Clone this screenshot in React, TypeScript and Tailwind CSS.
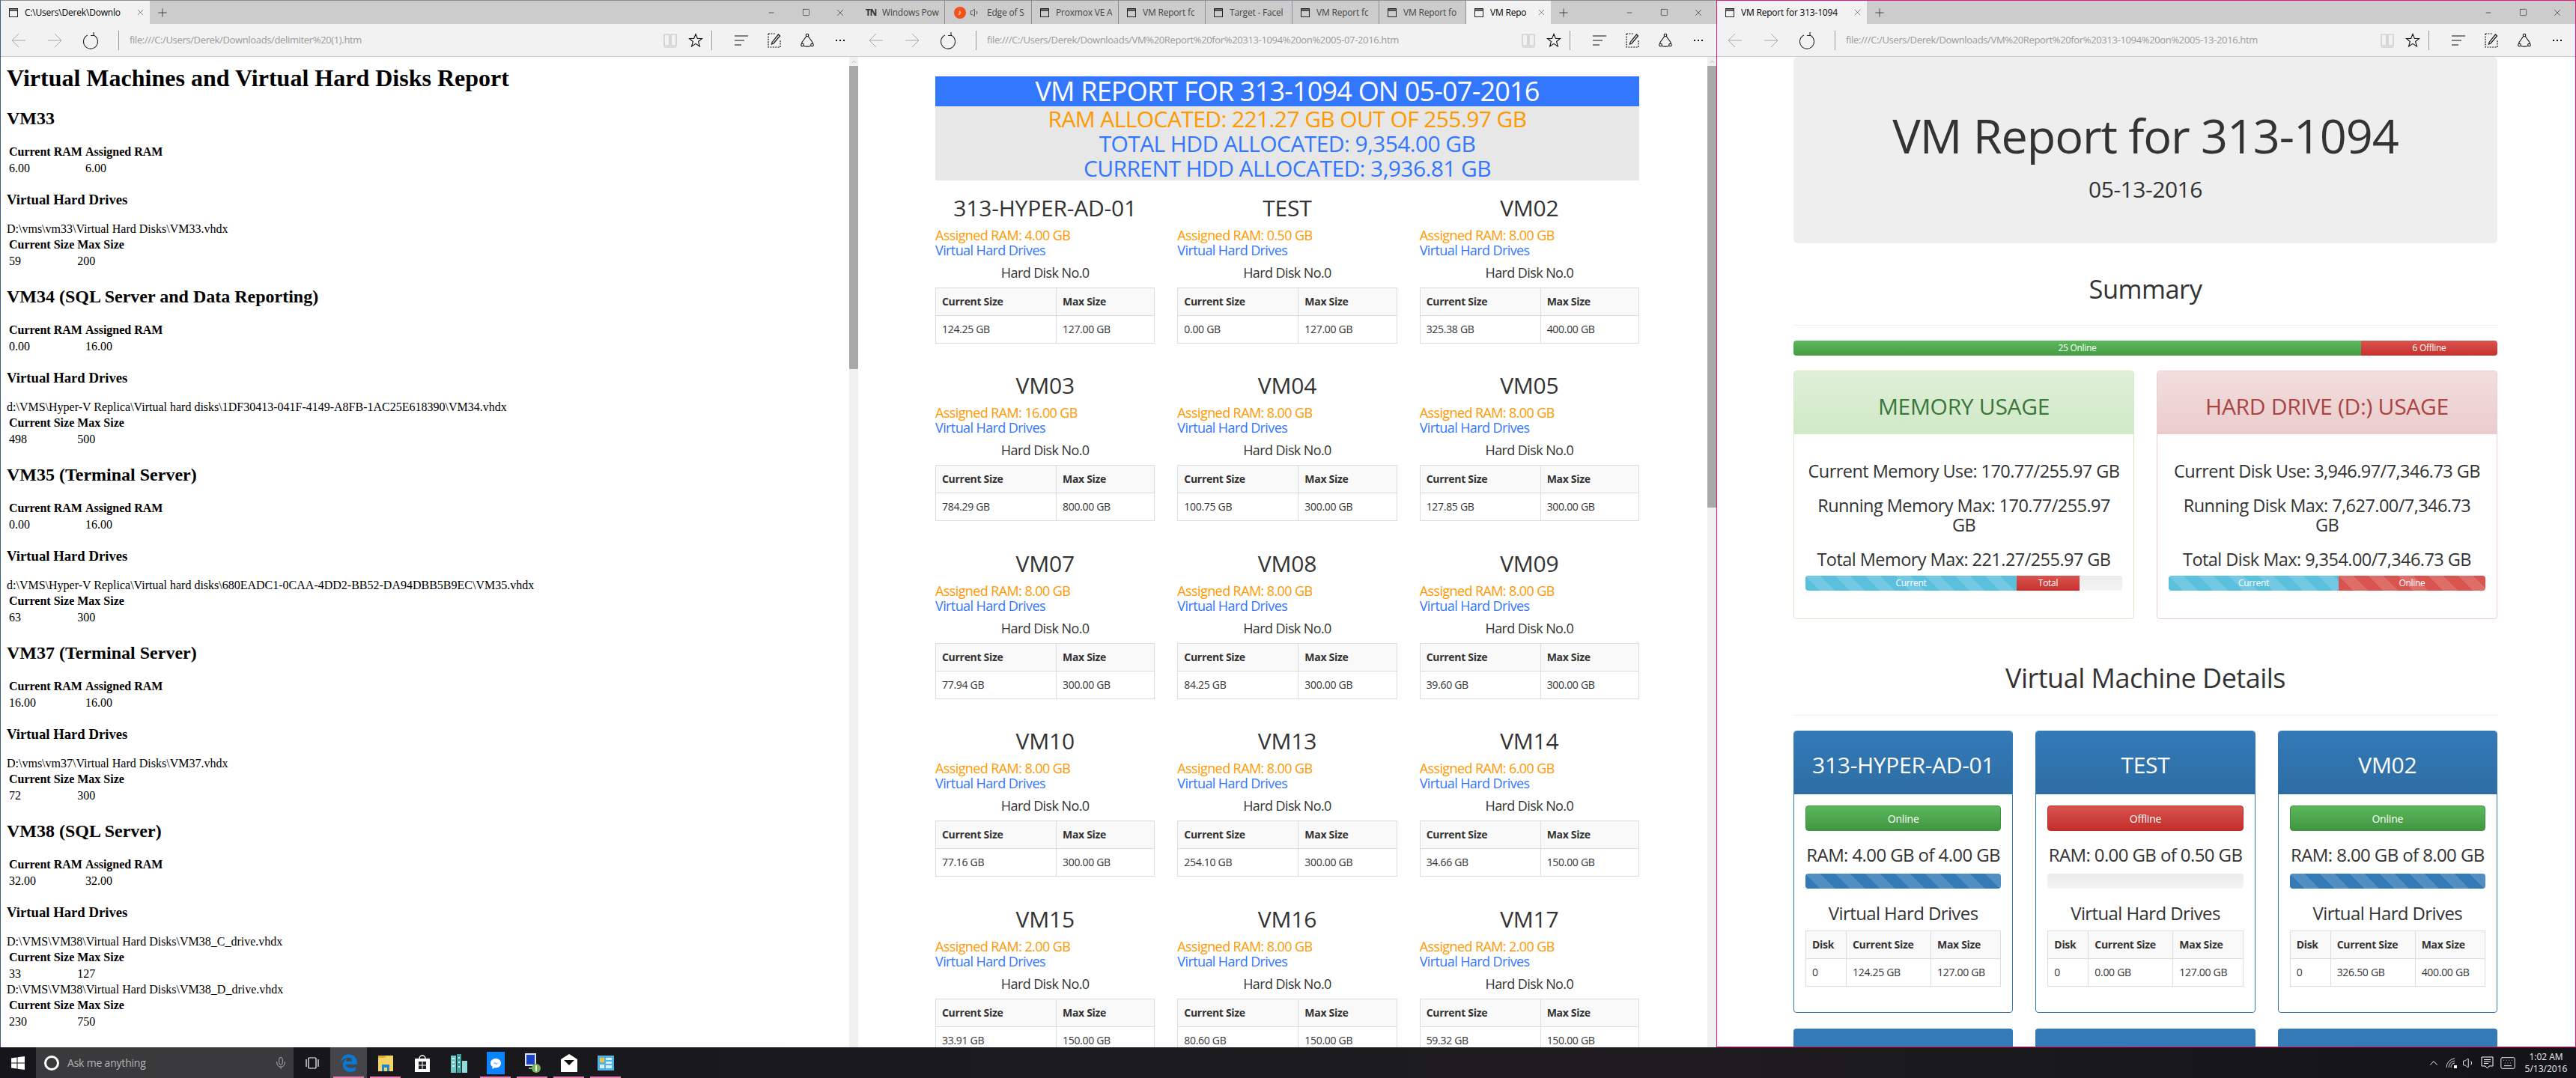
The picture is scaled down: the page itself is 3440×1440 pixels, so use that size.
import React from 'react';
import { FaEdgeLegacy } from 'react-icons/fa6';
import { ChevronUp, Keyboard, Mic, Volume1, X, Plus, Minus, Square } from 'lucide-react';

const stripes =
  'bg-[linear-gradient(45deg,rgba(255,255,255,.15)_25%,transparent_25%,transparent_50%,rgba(255,255,255,.15)_50%,rgba(255,255,255,.15)_75%,transparent_75%,transparent)] bg-size-[40px_40px]';

const PageIcon = () => (
  <svg width="14" height="14" viewBox="0 0 14 14" fill="none" stroke="#222" strokeWidth="1">
    <rect x="1.5" y="1.5" width="11" height="11" />
    <path d="M1.5 3.5h11" strokeWidth="2" />
  </svg>
);

interface TabProps {
  label: string;
  width: string;
  active?: boolean;
  icon?: React.ReactNode;
  iconWidth?: string;
}

const Tab: React.FC<TabProps> = ({ label, width, active, icon, iconWidth = 'w-[32px]' }) => (
  <div
    className={`relative flex h-full shrink-0 items-center ${width} ${
      active ? 'bg-[#f2f2f2] text-black' : 'border-r border-[#8f8f8f] bg-[#cccccc] text-[#444]'
    }`}
  >
    <div className={`flex shrink-0 items-center justify-center pl-[2px] ${iconWidth}`}>{icon ?? <PageIcon />}</div>
    <span className="overflow-hidden whitespace-nowrap text-[12px] tracking-[-0.2px]">{label}</span>
    {active && (
      <div className="ml-auto flex w-[26px] shrink-0 items-center justify-center">
        <X size={13} strokeWidth={1} color="#222" />
      </div>
    )}
  </div>
);

const Toolbar: React.FC<{ url: string }> = ({ url }) => (
  <div className="flex h-[44px] shrink-0 items-center border-b border-[#c8c8c8] bg-[#f2f2f2]">
    <div className="flex w-[48px] justify-center">
      <svg width="22" height="24" viewBox="0 0 22 24" fill="none" stroke="#a8a8a8" strokeWidth="1">
        <path d="M20 12H2M11 3l-9 9 9 9" />
      </svg>
    </div>
    <div className="flex w-[48px] justify-center">
      <svg width="22" height="24" viewBox="0 0 22 24" fill="none" stroke="#a8a8a8" strokeWidth="1">
        <path d="M2 12h18M11 3l9 9-9 9" />
      </svg>
    </div>
    <div className="flex w-[48px] justify-center">
      <svg width="20" height="24" viewBox="0 0 20 24" fill="none" stroke="#222" strokeWidth="1.1">
        <path d="M6 5a9.5 9.5 0 1 0 8 0M14 1v4.5h-4" />
      </svg>
    </div>
    <div className="ml-[13px] h-[26px] w-px bg-[#999]" />
    <div className="ml-[14px] min-w-0 flex-1 overflow-hidden whitespace-nowrap text-[13px] tracking-[-0.35px] text-[#9a9a9a]">
      {url}
    </div>
    <div className="flex w-[34px] justify-center">
      <svg width="20" height="20" viewBox="0 0 20 20" fill="none" stroke="#c4c4c4" strokeWidth="1.2">
        <path d="M2 2h7v15H2zM11 2h7v15h-7zM2 19h16" />
      </svg>
    </div>
    <div className="flex w-[34px] justify-center">
      <svg width="20" height="20" viewBox="0 0 20 20" fill="none" stroke="#111" strokeWidth="1.1">
        <path d="M10 1.5l2.4 6h6.1l-4.9 4 1.8 6.5-5.4-3.7L4.6 18l1.8-6.5-4.9-4h6.1z" />
      </svg>
    </div>
    <div className="ml-[4px] h-[26px] w-px bg-[#999]" />
    <div className="ml-[17px] flex w-[44px] justify-center">
      <svg width="20" height="20" viewBox="0 0 20 20" fill="none" stroke="#111" strokeWidth="1.2">
        <path d="M1 4h18M1 10h13M1 16h9" />
      </svg>
    </div>
    <div className="flex w-[44px] justify-center">
      <svg width="20" height="20" viewBox="0 0 20 20" fill="none" stroke="#111" strokeWidth="1.2">
        <path d="M2 1h9M2 1v18h16V9" strokeDasharray="2 1.4" />
        <path d="M15.5 2l2 2L9 14l-2.5 1 .6-2.6z" />
      </svg>
    </div>
    <div className="flex w-[44px] justify-center">
      <svg width="20" height="20" viewBox="0 0 20 20" fill="none" stroke="#111" strokeWidth="1.1">
        <circle cx="10" cy="3" r="1.8" />
        <circle cx="3.5" cy="16" r="1.8" />
        <circle cx="16.5" cy="16" r="1.8" />
        <path d="M8.8 4.5 3 12.5a5 5 0 0 0 0 2M11.2 4.5l5.8 8a5 5 0 0 1 0 2M5.3 17.2c3 1.2 6.4 1.2 9.4 0" />
      </svg>
    </div>
    <div className="mr-[2px] flex w-[44px] justify-center gap-[3px]">
      <span className="size-[2px] bg-[#111]" />
      <span className="size-[2px] bg-[#111]" />
      <span className="size-[2px] bg-[#111]" />
    </div>
  </div>
);

const TabStrip: React.FC<{ children: React.ReactNode }> = ({ children }) => (
  <div className="flex h-[31px] shrink-0 items-stretch bg-[#cccccc]">
    {children}
    <div className="flex w-[34px] shrink-0 items-center justify-center">
      <Plus size={18} strokeWidth={1} color="#222" />
    </div>
    <div className="ml-auto flex items-center pr-px">
      <div className="flex w-[46px] justify-center">
        <Minus size={10} strokeWidth={1.5} color="#111" />
      </div>
      <div className="flex w-[46px] justify-center">
        <Square size={11} strokeWidth={1.2} color="#111" />
      </div>
      <div className="flex w-[46px] justify-center">
        <X size={14} strokeWidth={1} color="#111" />
      </div>
    </div>
  </div>
);

const Scrollbar: React.FC<{ thumb: string }> = ({ thumb }) => (
  <div className="flex w-[12px] shrink-0 flex-col items-stretch bg-[#f0f0f0]">
    <div className="flex h-[12px] items-center justify-center text-[#888]">
      <ChevronUp size={9} strokeWidth={1.5} />
    </div>
    <div className={`bg-[#a8a8a8] ${thumb}`} />
  </div>
);

const leftSections = [
  {
    title: 'VM33',
    ram: ['6.00', '6.00'],
    drives: [{ path: 'D:\\vms\\vm33\\Virtual Hard Disks\\VM33.vhdx', size: ['59', '200'] }],
  },
  {
    title: 'VM34 (SQL Server and Data Reporting)',
    ram: ['0.00', '16.00'],
    drives: [
      {
        path: 'd:\\VMS\\Hyper-V Replica\\Virtual hard disks\\1DF30413-041F-4149-A8FB-1AC25E618390\\VM34.vhdx',
        size: ['498', '500'],
      },
    ],
  },
  {
    title: 'VM35 (Terminal Server)',
    ram: ['0.00', '16.00'],
    drives: [
      {
        path: 'd:\\VMS\\Hyper-V Replica\\Virtual hard disks\\680EADC1-0CAA-4DD2-BB52-DA94DBB5B9EC\\VM35.vhdx',
        size: ['63', '300'],
      },
    ],
  },
  {
    title: 'VM37 (Terminal Server)',
    ram: ['16.00', '16.00'],
    drives: [{ path: 'D:\\vms\\vm37\\Virtual Hard Disks\\VM37.vhdx', size: ['72', '300'] }],
  },
  {
    title: 'VM38 (SQL Server)',
    ram: ['32.00', '32.00'],
    drives: [
      { path: 'D:\\VMS\\VM38\\Virtual Hard Disks\\VM38_C_drive.vhdx', size: ['33', '127'] },
      { path: 'D:\\VMS\\VM38\\Virtual Hard Disks\\VM38_D_drive.vhdx', size: ['230', '750'] },
    ],
  },
];

const PlainTable: React.FC<{ head: string[]; row: string[] }> = ({ head, row }) => (
  <table className="border-separate border-spacing-[2px] text-[16px] leading-[18px]">
    <tbody>
      <tr>
        {head.map((h) => (
          <th key={h} className="p-px text-left font-bold">
            {h}
          </th>
        ))}
      </tr>
      <tr>
        {row.map((c, i) => (
          <td key={i} className="p-px">
            {c}
          </td>
        ))}
      </tr>
    </tbody>
  </table>
);

const LeftWindow = () => (
  <div className="flex w-[1146px] shrink-0 flex-col border-t border-l border-t-[#8a8f96] border-l-[#3b5a85]">
    <TabStrip>
      <Tab label="C:\Users\Derek\Downlo" width="w-[199px]" active />
    </TabStrip>
    <Toolbar url="file:///C:/Users/Derek/Downloads/delimiter%20(1).htm" />
    <div className="flex min-h-0 flex-1 bg-white">
      <div className="min-w-0 flex-1 overflow-hidden pt-[10px] pl-[8px] font-['Liberation_Serif',serif] text-black">
        <h1 className="text-[32px] leading-[37px] font-bold">Virtual Machines and Virtual Hard Disks Report</h1>
        {leftSections.map((s, i) => (
          <div key={s.title}>
            <h2 className={`text-[24px] leading-[28px] font-bold ${i === 0 ? 'mt-[21px]' : 'mt-[21.5px]'}`}>{s.title}</h2>
            <div className="mt-[19px]">
              <PlainTable head={['Current RAM', 'Assigned RAM']} row={s.ram} />
            </div>
            <h3 className="mt-[18.5px] text-[18.72px] leading-[22px] font-bold">Virtual Hard Drives</h3>
            <div className="mt-[19px]">
              {s.drives.map((d) => (
                <div key={d.path}>
                  <div className="text-[16px] leading-[18px]">{d.path}</div>
                  <PlainTable head={['Current Size', 'Max Size']} row={d.size} />
                </div>
              ))}
            </div>
          </div>
        ))}
      </div>
      <Scrollbar thumb="h-[405px]" />
    </div>
  </div>
);

const reportVms = [
  ['313-HYPER-AD-01', '4.00', '124.25', '127.00'],
  ['TEST', '0.50', '0.00', '127.00'],
  ['VM02', '8.00', '325.38', '400.00'],
  ['VM03', '16.00', '784.29', '800.00'],
  ['VM04', '8.00', '100.75', '300.00'],
  ['VM05', '8.00', '127.85', '300.00'],
  ['VM07', '8.00', '77.94', '300.00'],
  ['VM08', '8.00', '84.25', '300.00'],
  ['VM09', '8.00', '39.60', '300.00'],
  ['VM10', '8.00', '77.16', '300.00'],
  ['VM13', '8.00', '254.10', '300.00'],
  ['VM14', '6.00', '34.66', '150.00'],
  ['VM15', '2.00', '33.91', '150.00'],
  ['VM16', '8.00', '80.60', '150.00'],
  ['VM17', '2.00', '59.32', '150.00'],
];

const thClass = 'border border-[#ddd] bg-[#f9f9f9] p-[8px] text-left text-[14px] leading-[20px] font-bold tracking-[-0.3px] whitespace-nowrap';
const tdClass = 'border border-[#ddd] p-[8px] text-[14px] leading-[20px] tracking-[-0.3px] whitespace-nowrap';

const ReportCard: React.FC<{ vm: string[] }> = ({ vm }) => (
  <div className="text-[#333]">
    <div className="text-center text-[30px] leading-[33px] tracking-[-0.2px]">{vm[0]}</div>
    <div className="mt-[10px] text-[18px] leading-[20px] tracking-[-0.6px] text-[#ff9900]">Assigned RAM: {vm[1]} GB</div>
    <div className="text-[18px] leading-[20px] tracking-[-0.6px] text-[#3377ff]">Virtual Hard Drives</div>
    <div className="mt-[10px] text-center text-[18px] leading-[20px] tracking-[-0.6px]">Hard Disk No.0</div>
    <table className="mt-[10px] w-full table-fixed border-collapse">
      <tbody>
        <tr>
          <th className={`${thClass} w-[161px]`}>Current Size</th>
          <th className={thClass}>Max Size</th>
        </tr>
        <tr>
          <td className={tdClass}>{vm[2]} GB</td>
          <td className={tdClass}>{vm[3]} GB</td>
        </tr>
      </tbody>
    </table>
  </div>
);

const plainTabs = ['Proxmox VE A', 'VM Report fc', 'Target - Facel', 'VM Report fc', 'VM Report fo'];

const MiddleWindow = () => (
  <div className="flex w-[1146px] shrink-0 flex-col border-t border-t-[#8a8f96]">
    <TabStrip>
      <Tab
        label="Windows Pow"
        width="w-[116px]"
        icon={<span className="text-[12px] font-bold tracking-[-1px] text-[#333]">TN</span>}
      />
      <Tab
        label="Edge of S"
        width="w-[116px]"
        iconWidth="w-[56px]"
        icon={
          <span className="flex items-center gap-[5px]">
            <span className="flex size-[16px] items-center justify-center rounded-full bg-[#f0521e] text-[10px] font-bold text-white">
              ♪
            </span>
            <Volume1 size={14} strokeWidth={1.4} color="#333" />
          </span>
        }
      />
      {plainTabs.map((label, i) => (
        <Tab key={i} label={label} width="w-[116px]" />
      ))}
      <Tab label="VM Repo" width="w-[113px]" active />
    </TabStrip>
    <Toolbar url="file:///C:/Users/Derek/Downloads/VM%20Report%20for%20313-1094%20on%2005-07-2016.htm" />
    <div className="flex min-h-0 flex-1 bg-white">
      <div className="min-w-0 flex-1 overflow-hidden pt-[26px] pl-[103px]">
        <div className="w-[940px]">
          <div className="flex h-[40px] items-center justify-center bg-[#3377ff] text-[36px] tracking-[-0.8px] text-white">
            VM REPORT FOR 313-1094 ON 05-07-2016
          </div>
          <div className="flex h-[99px] flex-col items-center justify-center bg-[#e7e7e7] text-[30px] leading-[33px] tracking-[-0.6px]">
            <div className="text-[#ff9900]">RAM ALLOCATED: 221.27 GB OUT OF 255.97 GB</div>
            <div className="text-[#3377ff]">TOTAL HDD ALLOCATED: 9,354.00 GB</div>
            <div className="text-[#3377ff]">CURRENT HDD ALLOCATED: 3,936.81 GB</div>
          </div>
          <div className="mt-[19.5px] grid auto-rows-[237.6px] grid-cols-3 gap-x-[30px]">
            {reportVms.map((vm) => (
              <ReportCard key={vm[0]} vm={vm} />
            ))}
          </div>
        </div>
      </div>
      <Scrollbar thumb="h-[590px]" />
    </div>
  </div>
);

const detailVms = [
  ['313-HYPER-AD-01', 'Online', '4.00', '4.00', '124.25', '127.00'],
  ['TEST', 'Offline', '0.00', '0.50', '0.00', '127.00'],
  ['VM02', 'Online', '8.00', '8.00', '326.50', '400.00'],
];

const VmPanel: React.FC<{ vm: string[] }> = ({ vm }) => {
  const online = vm[1] === 'Online';
  return (
    <div className="h-[377px] overflow-hidden rounded-[4px] border border-[#337ab7]">
      <div className="flex h-[84px] items-center justify-center bg-[linear-gradient(#337ab7,#2e6da4)] pt-[4px] text-[30px] tracking-[-0.3px] text-white">
        {vm[0]}
      </div>
      <div className="px-[15px] pt-[15px]">
        <div
          className={`flex h-[34px] items-center justify-center rounded-[4px] border text-[14px] tracking-[-0.2px] text-white ${
            online
              ? 'border-[#3e8f3e] bg-[linear-gradient(#5cb85c,#419641)]'
              : 'border-[#b92c28] bg-[linear-gradient(#d9534f,#c12e2a)]'
          }`}
        >
          {vm[1]}
        </div>
        <div className="mt-[19px] text-center text-[24px] leading-[26px] tracking-[-0.6px] whitespace-nowrap">
          RAM: {vm[2]} GB of {vm[3]} GB
        </div>
        <div className="mt-[12px] h-[20px] overflow-hidden rounded-[4px] bg-[linear-gradient(#ebebeb,#f5f5f5)]">
          {online && <div className={`h-full w-full bg-[#337ab7] ${stripes}`} />}
        </div>
        <div className="mt-[20px] text-center text-[24px] leading-[26px] tracking-[-0.6px]">Virtual Hard Drives</div>
        <table className="mt-[10px] w-full table-fixed border-collapse">
          <tbody>
            <tr>
              <th className={`${thClass} w-[54px]`}>Disk</th>
              <th className={`${thClass} w-[113px]`}>Current Size</th>
              <th className={thClass}>Max Size</th>
            </tr>
            <tr>
              <td className={tdClass}>0</td>
              <td className={tdClass}>{vm[4]} GB</td>
              <td className={tdClass}>{vm[5]} GB</td>
            </tr>
          </tbody>
        </table>
      </div>
    </div>
  );
};

const RightWindow = () => (
  <div className="flex min-w-0 flex-1 flex-col border-x border-t border-b border-[#e6177a]">
    <TabStrip>
      <Tab label="VM Report for 313-1094" width="w-[200px]" active />
    </TabStrip>
    <Toolbar url="file:///C:/Users/Derek/Downloads/VM%20Report%20for%20313-1094%20on%2005-13-2016.htm" />
    <div className="min-h-0 flex-1 overflow-hidden bg-white pl-[102px] text-[#333]">
      <div className="w-[940px]">
        <div className="flex h-[249px] flex-col items-center rounded-[6px] bg-[#eeeeee] pt-[70px]">
          <div className="text-[63px] leading-[69px] tracking-[-1.1px]">VM Report for 313-1094</div>
          <div className="mt-[21px] text-[30px] leading-[33px] tracking-[-0.45px]">05-13-2016</div>
        </div>
        <div className="mt-[41px] text-center text-[34.5px] leading-[40px] tracking-[-0.5px]">Summary</div>
        <div className="mt-[28px] h-px bg-[#eeeeee]" />
        <div className="mt-[20px] flex h-[20px] overflow-hidden rounded-[4px] text-[12px] leading-[20px] tracking-[-0.3px] text-white">
          <div className="w-[758px] bg-[linear-gradient(#5cb85c,#449d44)] text-center">25 Online</div>
          <div className="flex-1 bg-[linear-gradient(#d9534f,#c9302c)] text-center">6 Offline</div>
        </div>
        <div className="mt-[20px] grid grid-cols-2 gap-x-[30px]">
          <div className="h-[332px] overflow-hidden rounded-[4px] border border-[#d6e9c6]">
            <div className="flex h-[84px] items-center justify-center bg-[linear-gradient(#dff0d8,#d0e9c6)] pt-[8px] text-[30px] tracking-[-0.3px] text-[#3c763d]">
              MEMORY USAGE
            </div>
            <div className="px-[15px] pt-[36px] text-center text-[23.5px] leading-[26px] tracking-[-0.55px] whitespace-nowrap">
              <p className="mb-[20px]">Current Memory Use: 170.77/255.97 GB</p>
              <p className="mb-[20px]">
                Running Memory Max: 170.77/255.97
                <br />
                GB
              </p>
              <p className="mb-[9px]">Total Memory Max: 221.27/255.97 GB</p>
              <div className="flex h-[20px] overflow-hidden rounded-[4px] bg-[linear-gradient(#ebebeb,#f5f5f5)] text-[12px] leading-[20px] tracking-[-0.3px] text-white">
                <div className={`w-[282px] bg-[#5bc0de] ${stripes}`}>Current</div>
                <div className="w-[84px] bg-[linear-gradient(#d9534f,#c9302c)]">Total</div>
              </div>
            </div>
          </div>
          <div className="h-[332px] overflow-hidden rounded-[4px] border border-[#ebccd1]">
            <div className="flex h-[84px] items-center justify-center bg-[linear-gradient(#f2dede,#ebcccc)] pt-[8px] text-[30px] tracking-[-0.3px] text-[#a94442]">
              HARD DRIVE (D:) USAGE
            </div>
            <div className="px-[15px] pt-[36px] text-center text-[23.5px] leading-[26px] tracking-[-0.55px] whitespace-nowrap">
              <p className="mb-[20px]">Current Disk Use: 3,946.97/7,346.73 GB</p>
              <p className="mb-[20px]">
                Running Disk Max: 7,627.00/7,346.73
                <br />
                GB
              </p>
              <p className="mb-[9px]">Total Disk Max: 9,354.00/7,346.73 GB</p>
              <div className="flex h-[20px] overflow-hidden rounded-[4px] text-[12px] leading-[20px] tracking-[-0.3px] text-white">
                <div className={`w-[227px] bg-[#5bc0de] ${stripes}`}>Current</div>
                <div className={`flex-1 bg-[#d9534f] ${stripes}`}>Online</div>
              </div>
            </div>
          </div>
        </div>
        <div className="mt-[59px] text-center text-[36px] leading-[40px] tracking-[-0.5px]">Virtual Machine Details</div>
        <div className="mt-[29px] h-px bg-[#eeeeee]" />
        <div className="mt-[20px] grid grid-cols-3 gap-x-[30px] gap-y-[21px]">
          {detailVms.map((vm) => (
            <VmPanel key={vm[0]} vm={vm} />
          ))}
          {/* next row, only the heading shows above the window edge */}
          <div className="h-[84px] rounded-t-[4px] bg-[#337ab7]" />
          <div className="h-[84px] rounded-t-[4px] bg-[#337ab7]" />
          <div className="h-[84px] rounded-t-[4px] bg-[#337ab7]" />
        </div>
      </div>
    </div>
  </div>
);

const TaskCell: React.FC<{ children: React.ReactNode; open?: boolean; active?: boolean }> = ({ children, open, active }) => (
  <div className={`relative flex h-full w-[49px] shrink-0 items-center justify-center ${active ? 'bg-[#45454a]' : ''}`}>
    {children}
    {open && <span className="absolute right-[4px] bottom-0 left-[4px] h-[2px] bg-[#ee7fb5]" />}
  </div>
);

const Taskbar = () => (
  <div className="flex h-[41px] items-center bg-[linear-gradient(90deg,#15151b,#1b1a1e_40%,#1e1c1e_65%,#131318)] text-white">
    <div className="flex h-full w-[48px] items-center justify-center">
      <svg width="18" height="18" viewBox="0 0 18 18" fill="#fff">
        <path d="M0 2.5 7.5 1.4v7.2H0zM8.5 1.2 18 0v8.6H8.5zM0 9.5h7.5v7.1L0 15.5zM8.5 9.5H18V18l-9.5-1.3z" />
      </svg>
    </div>
    <div className="flex h-full w-[344px] items-center bg-[#3a3a3c]">
      <div className="ml-[11px] size-[20px] rounded-full border-[3px] border-white" />
      <span className="ml-[11px] text-[14px] tracking-[-0.2px] text-[#b5b5b5]">Ask me anything</span>
      <div className="ml-auto mr-[8px]">
        <Mic size={18} strokeWidth={1.2} color="#b5b5b5" />
      </div>
    </div>
    <div className="flex h-full w-[49px] items-center justify-center">
      <svg width="20" height="16" viewBox="0 0 20 16" fill="none" stroke="#fff" strokeWidth="1.2">
        <rect x="5" y="1" width="10" height="14" rx="1" />
        <path d="M2 3v10M18 3v10" />
      </svg>
    </div>
    <TaskCell open active>
      <FaEdgeLegacy size={24} color="#0a78d7" />
    </TaskCell>
    <TaskCell open>
      <svg width="22" height="24" viewBox="0 0 22 24">
        <path d="M1 2h20v21H1z" fill="#f6d365" />
        <path d="M1 2h9l2 3H1z" fill="#e0a93a" />
        <path d="M6 14h10v9h-3v-5H9v5H6z" fill="#1e88c9" />
      </svg>
    </TaskCell>
    <TaskCell>
      <svg width="22" height="26" viewBox="0 0 22 26">
        <path d="M1 7h20v18H1z" fill="#fff" />
        <path d="M7 7a4 4 0 0 1 8 0" fill="none" stroke="#fff" strokeWidth="1.5" />
        <path d="M6 11h4.5v4.5H6zM11.5 11H16v4.5h-4.5zM6 16.5h4.5V21H6zM11.5 16.5H16V21h-4.5z" fill="#222" />
      </svg>
    </TaskCell>
    <TaskCell>
      <svg width="24" height="26" viewBox="0 0 24 26">
        <path d="M1 3h7v23H1z" fill="#6cc7c7" />
        <path d="M9 1h6v25H9z" fill="#3f9f9f" />
        <path d="M16 10h7v16h-7z" fill="#8fdcdc" />
        <path d="M3 7h3M3 12h3M3 17h3M11 6h2M11 12h2M11 18h2" stroke="#e8f8f8" strokeWidth="2" />
      </svg>
    </TaskCell>
    <TaskCell open>
      <svg width="24" height="30" viewBox="0 0 24 30">
        <path d="M0 0h24v30H0z" fill="#0a84ff" />
        <path d="M12 9c-4 0-7 2.7-7 6 0 2 1 3.6 2.5 4.7V23l3-1.700c.5.1 1 .1 1.500.1 4 0 7-2.700 7-6.200S16 9 12 9z" fill="#fff" />
        <path d="m8 17 3-3 2 2 3-2-3 3-2-2z" fill="#0a84ff" />
      </svg>
    </TaskCell>
    <TaskCell open>
      <svg width="26" height="28" viewBox="0 0 26 28">
        <path d="M3 1h15v17H3z" fill="#dfe6f2" />
        <path d="M5 3h11v13H5z" fill="#1a44c8" />
        <path d="M8 20h8v2H8z" fill="#9aa7bd" />
        <circle cx="18" cy="21" r="6" fill="#77b255" />
        <path d="M18 17v8" stroke="#fff" strokeWidth="2" />
      </svg>
    </TaskCell>
    <TaskCell open>
      <svg width="24" height="24" viewBox="0 0 24 24">
        <path d="M1 7 12 0l11 7v17H1z" fill="#fff" />
        <path d="M5 8h14l-7 7z" fill="#111" />
      </svg>
    </TaskCell>
    <TaskCell open>
      <svg width="22" height="22" viewBox="0 0 22 22">
        <path d="M0 1h22v20H0z" fill="#4fb3e8" />
        <path d="M3 4h6v6H3z" fill="#f5c33b" />
        <path d="M11 4h8v3h-8zM11 9h8v3h-8zM3 13h6v5H3zM11 14h8v4h-8z" fill="#d9f1fc" />
      </svg>
    </TaskCell>
    <div className="ml-auto flex h-full items-center pr-[4px]">
      <div className="flex w-[24px] justify-center">
        <ChevronUp size={18} strokeWidth={1.3} />
      </div>
      <div className="flex w-[24px] justify-center">
        <svg width="16" height="14" viewBox="0 0 16 14" fill="none" stroke="#ddd" strokeWidth="1">
          <path d="M1 13a12 12 0 0 1 11-12M4 13a9 9 0 0 1 8-9M7 13a6 6 0 0 1 5-6" />
          <path d="M11 10h4v4h-4z" fill="#fff" stroke="none" />
        </svg>
      </div>
      <div className="flex w-[22px] justify-center">
        <Volume1 size={18} strokeWidth={1.2} />
      </div>
      <div className="flex w-[26px] justify-center">
        <svg width="17" height="17" viewBox="0 0 17 17" fill="none" stroke="#fff" strokeWidth="1">
          <path d="M1 1h15v12h-5l-2.5 3L6 13H1zM4 4.5h9M4 7h9M4 9.5h6" />
        </svg>
      </div>
      <div className="flex w-[30px] justify-center">
        <Keyboard size={22} strokeWidth={1} />
      </div>
      <div className="flex w-[72px] flex-col items-center text-[12px] leading-[16px] text-[#eee]">
        <span>1:02 AM</span>
        <span>5/13/2016</span>
      </div>
    </div>
  </div>
);

export default function App() {
  return (
    <div className="flex h-[1440px] w-[3440px] flex-col overflow-hidden font-['Open_Sans',sans-serif]">
      <div className="flex h-[1399px] shrink-0">
        <LeftWindow />
        <MiddleWindow />
        <RightWindow />
      </div>
      <Taskbar />
    </div>
  );
}
